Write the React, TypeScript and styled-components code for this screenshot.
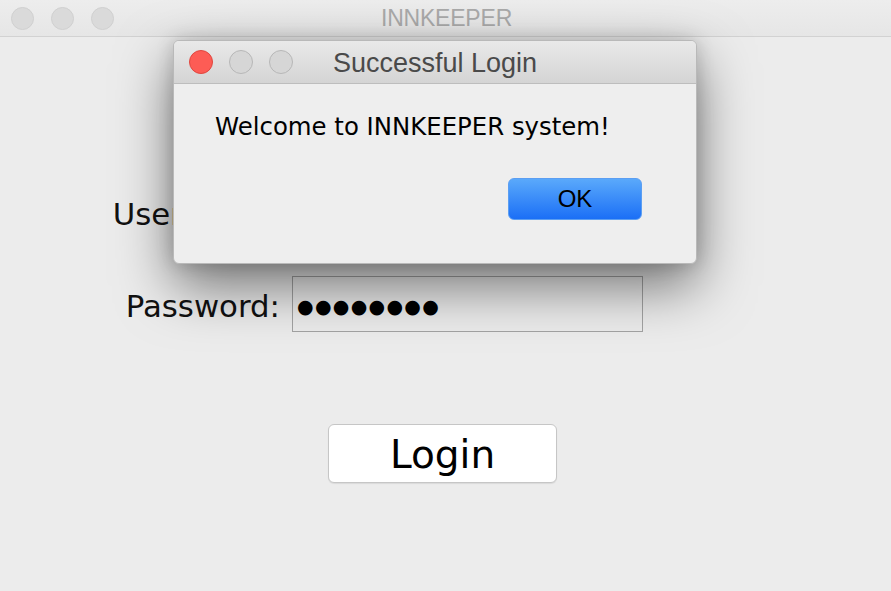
import React from 'react'
import styled, { createGlobalStyle } from 'styled-components'

const GlobalStyle = createGlobalStyle`
  html, body {
    margin: 0;
    padding: 0;
    background: #ececec;
    overflow: hidden;
  }
`

const Window = styled.div`
  position: relative;
  width: 891px;
  height: 591px;
  background: #ececec;
  display: flex;
  flex-direction: column;
  font-family: 'DejaVu Sans', 'Liberation Sans', sans-serif;
`

const TitleBar = styled.div<{ height: number; top: string; bottom: string; line: string }>`
  position: relative;
  height: ${({ height }) => height}px;
  flex-shrink: 0;
  display: flex;
  align-items: center;
  justify-content: center;
  background: linear-gradient(${({ top }) => top}, ${({ bottom }) => bottom});
  border-bottom: 1px solid ${({ line }) => line};
`

const Lights = styled.div<{ left: number; gap: number }>`
  position: absolute;
  left: ${({ left }) => left}px;
  top: 0;
  bottom: 0;
  display: flex;
  align-items: center;
  gap: ${({ gap }) => gap}px;
`

const Light = styled.span<{ fill: string; ring: string; size: number }>`
  width: ${({ size }) => size}px;
  height: ${({ size }) => size}px;
  box-sizing: border-box;
  border-radius: 50%;
  background: ${({ fill }) => fill};
  border: 1px solid ${({ ring }) => ring};
`

const WindowTitle = styled.span`
  font-family: 'Liberation Sans', Arial, sans-serif;
  font-size: 23px;
  letter-spacing: -0.2px;
  color: #a9a9a9;
  padding-left: 2px;
`

const Content = styled.div`
  flex: 1;
  display: flex;
  flex-direction: column;
  padding-top: 147px;
`

const Form = styled.div`
  display: grid;
  grid-template-columns: 164px 351px;
  grid-auto-rows: 56px;
  column-gap: 12px;
  row-gap: 36px;
  margin-left: 116px;
`

const Label = styled.label`
  display: flex;
  align-items: center;
  justify-content: flex-end;
  font-size: 30.8px;
  color: #111;
  padding-top: 3px;
  white-space: nowrap;
`

const Field = styled.div`
  box-sizing: border-box;
  border: 1px solid #a3a3a3;
  background: #ececec;
  display: flex;
  align-items: center;
  padding: 4px 0 0 4px;
`

const Dots = styled.span`
  font-family: 'DejaVu Sans', sans-serif;
  font-size: 19px;
  letter-spacing: 1.3px;
  color: #000;
`

const ButtonRow = styled.div`
  display: flex;
  justify-content: center;
  padding-right: 6px;
  margin-top: 92px;
`

const LoginButton = styled.button`
  width: 229px;
  height: 59px;
  box-sizing: border-box;
  background: #fff;
  border: 1px solid #c6c6c6;
  border-radius: 6px;
  box-shadow: 0 1px 1px rgba(0, 0, 0, 0.08);
  font-family: 'DejaVu Sans', sans-serif;
  font-size: 39px;
  color: #000;
  padding: 0;
  padding-top: 2px;
`

const Dialog = styled.div`
  position: absolute;
  left: 173px;
  top: 40px;
  width: 524px;
  height: 224px;
  box-sizing: border-box;
  border: 1px solid #b9b9b9;
  border-radius: 6px;
  overflow: hidden;
  background: #eeeeee;
  display: flex;
  flex-direction: column;
  box-shadow: 0 22px 55px rgba(0, 0, 0, 0.52), 0 0 18px rgba(0, 0, 0, 0.16);
  z-index: 2;
`

const DialogTitle = styled.span`
  font-family: 'Liberation Sans', Arial, sans-serif;
  font-size: 27px;
  color: #4a4a4a;
  padding-top: 2px;
`

const DialogBody = styled.div`
  flex: 1;
  display: flex;
  flex-direction: column;
  padding: 29px 54px 0 41px;
`

const Message = styled.p`
  margin: 0;
  font-size: 24.4px;
  line-height: 28px;
  color: #000;
`

const DialogActions = styled.div`
  display: flex;
  justify-content: flex-end;
  margin-top: 37px;
`

const OkButton = styled.button`
  width: 134px;
  height: 42px;
  box-sizing: border-box;
  border: 1px solid #5b9ef2;
  border-radius: 6px;
  background: linear-gradient(#5aa9fb, #1b6ff6);
  font-family: 'Liberation Sans', Arial, sans-serif;
  font-size: 24px;
  color: #000;
  padding: 0;
`

export default function App() {
  return (
    <Window>
      <GlobalStyle />
      <TitleBar height={36} top="#ededed" bottom="#e6e6e6" line="#d2d2d2">
        <Lights left={11} gap={17}>
          <Light size={23} fill="#dadada" ring="#d0d0d0" />
          <Light size={23} fill="#dadada" ring="#d0d0d0" />
          <Light size={23} fill="#dadada" ring="#d0d0d0" />
        </Lights>
        <WindowTitle>INNKEEPER</WindowTitle>
      </TitleBar>
      <Content>
        <Form>
          <Label>Username:</Label>
          <Field />
          <Label>Password:</Label>
          <Field>
            <Dots>●●●●●●●●</Dots>
          </Field>
        </Form>
        <ButtonRow>
          <LoginButton>Login</LoginButton>
        </ButtonRow>
      </Content>

      <Dialog>
        <TitleBar height={42} top="#e9e9e9" bottom="#d4d4d4" line="#bdbdbd">
          <Lights left={15} gap={16}>
            <Light size={24} fill="#fd5c55" ring="#e0473f" />
            <Light size={24} fill="#d6d6d6" ring="#b7b7b7" />
            <Light size={24} fill="#d6d6d6" ring="#b7b7b7" />
          </Lights>
          <DialogTitle>Successful Login</DialogTitle>
        </TitleBar>
        <DialogBody>
          <Message>Welcome to INNKEEPER system!</Message>
          <DialogActions>
            <OkButton>OK</OkButton>
          </DialogActions>
        </DialogBody>
      </Dialog>
    </Window>
  )
}
